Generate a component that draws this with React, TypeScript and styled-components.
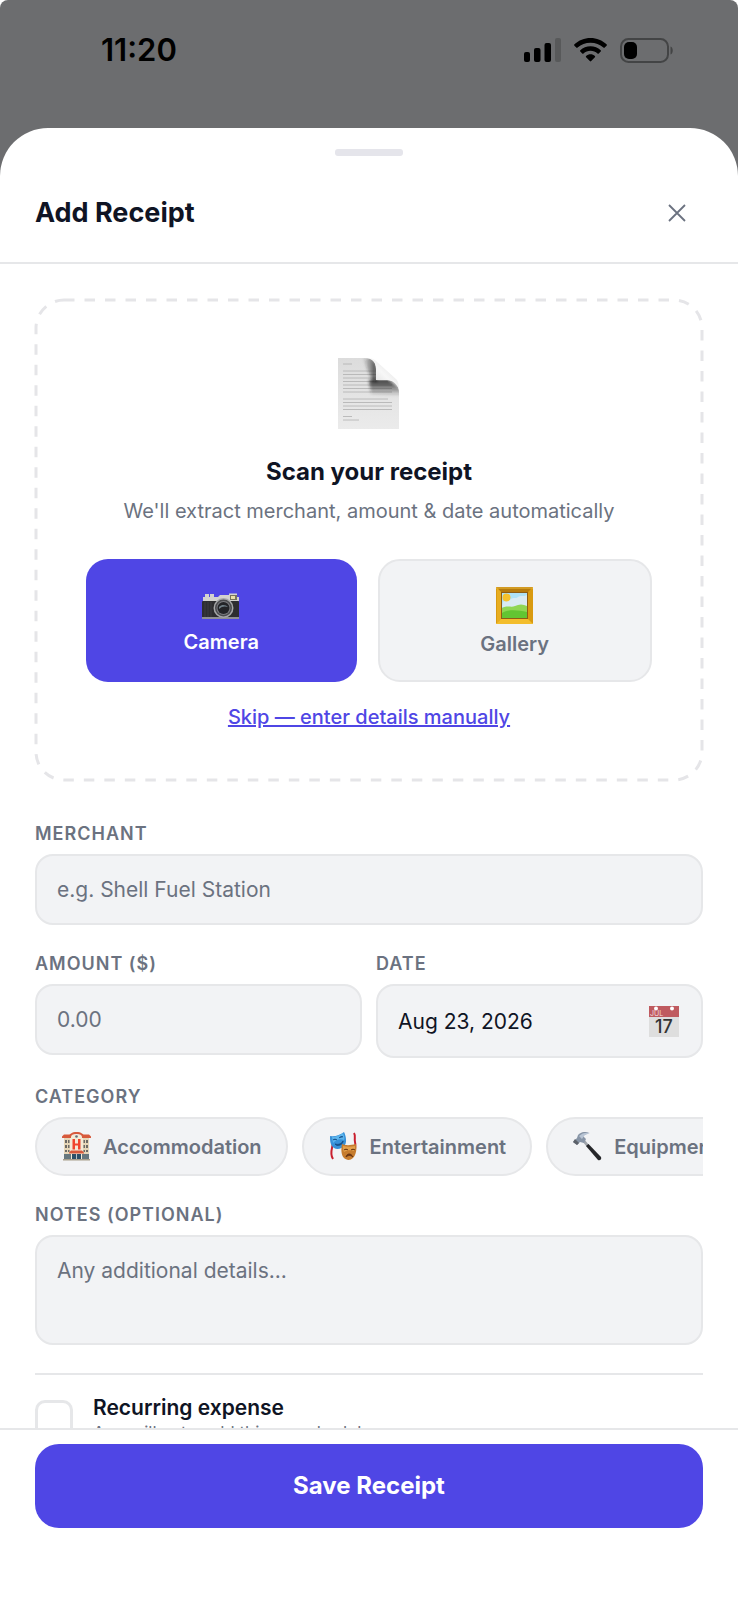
import React, { useState } from 'react';
import styled, { createGlobalStyle, css, ThemeProvider } from 'styled-components';

const theme = {
	colors: {
		backdrop: '#6c6d6f',
		sheet: '#ffffff',
		font: '#0f1424',
		muted: '#6b7280',
		field: '#f2f3f5',
		border: '#e6e7e9',
		handle: '#e5e5eb',
		primary: '#4f46e5',
	},
};

const GlobalStyle = createGlobalStyle`
	*, *::before, *::after {
		box-sizing: border-box;
	}
	body {
		margin: 0;
		background-color: #ffffff;
	}
	body, button, input, textarea {
		font-family: Inter, Roboto, "Liberation Sans", sans-serif;
	}
	h1, h2, p {
		margin: 0;
	}
	button {
		border: 0;
		background: none;
		cursor: pointer;
	}
	svg {
		display: block;
		flex-shrink: 0;
	}
`;

const Screen = styled.div`
	display: flex;
	flex-direction: column;
	height: 100vh;
	border-radius: 8px 8px 0 0;
	background-color: ${({ theme }) => theme.colors.backdrop};
	color: ${({ theme }) => theme.colors.font};
	overflow: hidden;
`;

const StatusBar = styled.div`
	display: flex;
	align-items: center;
	justify-content: space-between;
	flex-shrink: 0;
	height: 128px;
	padding: 0 64px 28px 101px;
	color: #000000;
`;

const Time = styled.time`
	font-size: 31px;
	line-height: 36px;
	font-weight: 600;
`;

const StatusIcons = styled.div`
	display: flex;
	align-items: center;
	gap: 13px;
`;

const Sheet = styled.main`
	display: flex;
	flex-direction: column;
	flex: 1;
	min-height: 0;
	border-radius: 48px 48px 0 0;
	background-color: ${({ theme }) => theme.colors.sheet};
`;

const Handle = styled.div`
	align-self: center;
	flex-shrink: 0;
	width: 68px;
	height: 7px;
	margin-top: 21px;
	border-radius: 3px;
	background-color: ${({ theme }) => theme.colors.handle};
`;

const Header = styled.header`
	display: flex;
	align-items: center;
	justify-content: space-between;
	flex-shrink: 0;
	padding: 32px 35px 24px;
	border-bottom: 2px solid ${({ theme }) => theme.colors.border};
`;

const Title = styled.h1`
	font-size: 27px;
	line-height: 34px;
	font-weight: 700;
`;

const CloseButton = styled.button`
	display: flex;
	align-items: center;
	justify-content: center;
	width: 52px;
	height: 50px;
	padding: 0;
	color: ${({ theme }) => theme.colors.muted};
`;

const Body = styled.div`
	flex: 1;
	min-height: 0;
	padding: 35px 35px 28px;
	overflow-y: auto;
	scrollbar-width: none;
`;

const ScanBox = styled.section`
	position: relative;
	display: flex;
	flex-direction: column;
	align-items: center;
	margin-bottom: 42px;
	padding: 59px 51px 51px;
`;

const DashedOutline = styled.svg`
	position: absolute;
	inset: 1px;
	width: calc(100% - 2px);
	height: calc(100% - 2px);
	overflow: visible;
	pointer-events: none;
`;

const ScanTitle = styled.h2`
	margin-top: 28px;
	font-size: 24px;
	line-height: 30px;
	font-weight: 700;
`;

const ScanText = styled.p`
	margin-top: 11px;
	font-size: 20px;
	line-height: 26px;
	color: ${({ theme }) => theme.colors.muted};
`;

const ScanActions = styled.div`
	display: flex;
	align-self: stretch;
	gap: 21px;
	margin-top: 35px;
`;

const ScanButton = styled.button<{ $primary?: boolean }>`
	display: flex;
	flex: 1 1 0;
	flex-direction: column;
	align-items: center;
	justify-content: flex-start;
	gap: 4px;
	padding: 26px 16px 23px;
	border-radius: 22px;
	font-size: 20px;
	line-height: 26px;
	font-weight: 600;
	${({ $primary, theme }) => $primary ? css`
		background-color: ${theme.colors.primary};
		color: #ffffff;
	` : css`
		border: 2px solid ${theme.colors.border};
		background-color: ${theme.colors.field};
		color: ${theme.colors.muted};
	`}
`;

const SkipButton = styled.button`
	margin-top: 22px;
	padding: 0;
	font-size: 20px;
	line-height: 26px;
	font-weight: 500;
	text-decoration: underline;
	color: ${({ theme }) => theme.colors.primary};
`;

const Form = styled.form`
	display: flex;
	flex-direction: column;
	gap: 28px;
`;

const Columns = styled.div`
	display: grid;
	grid-template-columns: 1fr 1fr;
	align-items: start;
	gap: 14px;
`;

const Field = styled.div`
	display: flex;
	flex-direction: column;
	gap: 9px;
	min-width: 0;
`;

const labelStyle = css`
	font-size: 18px;
	line-height: 22px;
	font-weight: 600;
	letter-spacing: 1px;
	text-transform: uppercase;
	color: ${({ theme }) => theme.colors.muted};
`;

const Label = styled.label`
	${labelStyle}
`;

const GroupLabel = styled.span`
	${labelStyle}
`;

const fieldStyle = css`
	width: 100%;
	padding: 20px;
	border: 2px solid ${({ theme }) => theme.colors.border};
	border-radius: 18px;
	outline: none;
	background-color: ${({ theme }) => theme.colors.field};
	color: ${({ theme }) => theme.colors.font};
	font-size: 21px;
	line-height: 27px;
	&::placeholder {
		color: ${({ theme }) => theme.colors.muted};
		opacity: 1;
	}
	&:focus-visible {
		border-color: ${({ theme }) => theme.colors.primary};
	}
`;

const TextInput = styled.input`
	${fieldStyle}
	height: 71px;
`;

const TextArea = styled.textarea`
	${fieldStyle}
	display: block;
	height: 110px;
	resize: none;
`;

const DateButton = styled.button`
	${fieldStyle}
	display: flex;
	align-items: center;
	justify-content: space-between;
	height: 74px;
	padding-right: 22px;
`;

const Chips = styled.div`
	display: flex;
	gap: 14px;
	overflow-x: auto;
	scrollbar-width: none;
`;

const Chip = styled.button<{ $selected: boolean }>`
	display: flex;
	align-items: center;
	flex-shrink: 0;
	gap: 12px;
	height: 59px;
	padding: 0 24px 0 25px;
	border: 2px solid ${({ $selected, theme }) => $selected ? theme.colors.primary : theme.colors.border};
	border-radius: 30px;
	background-color: ${({ theme }) => theme.colors.field};
	color: ${({ theme }) => theme.colors.muted};
	font-size: 20px;
	line-height: 26px;
	font-weight: 600;
`;

const RecurringRow = styled.label`
	display: flex;
	align-items: center;
	gap: 20px;
	padding-top: 19px;
	border-top: 2px solid ${({ theme }) => theme.colors.border};
`;

const Checkbox = styled.input`
	appearance: none;
	flex-shrink: 0;
	width: 38px;
	height: 38px;
	margin: 0;
	border: 3px solid ${({ theme }) => theme.colors.border};
	border-radius: 10px;
	background-color: #ffffff;
	&:checked {
		border-color: ${({ theme }) => theme.colors.primary};
		background-color: ${({ theme }) => theme.colors.primary};
	}
`;

const RecurringTitle = styled.span`
	display: block;
	font-size: 21px;
	line-height: 28px;
	font-weight: 600;
`;

const RecurringText = styled.span`
	display: block;
	font-size: 17px;
	line-height: 22px;
	color: ${({ theme }) => theme.colors.muted};
`;

const Footer = styled.footer`
	flex-shrink: 0;
	padding: 14px 35px 72px;
	border-top: 2px solid ${({ theme }) => theme.colors.border};
`;

const SaveButton = styled.button`
	width: 100%;
	padding: 27px;
	border-radius: 24px;
	background-color: ${({ theme }) => theme.colors.primary};
	color: #ffffff;
	font-size: 24px;
	line-height: 30px;
	font-weight: 700;
`;

const SignalIcon = () => (
	<svg width="37" height="24" viewBox="0 0 37 24" aria-hidden="true">
		<rect x="0" y="14" width="6" height="10" rx="2" />
		<rect x="10" y="10" width="6.500" height="14" rx="2" />
		<rect x="20.500" y="5" width="6.500" height="19" rx="2" />
		<rect x="31" y="0" width="6" height="24" rx="2" fill="#58595a" />
	</svg>
);

const WifiIcon = () => (
	<svg width="33" height="24" viewBox="0 0 33 24" aria-hidden="true">
		<path d="M16.5 0C22.7 0 28.3 2.4 32.6 6.3c.4.4.4 1 0 1.4l-1.9 1.9c-.4.4-.9.4-1.3 0C25.9 6.500 21.400 4.700 16.500 4.700S7.100 6.500 3.600 9.600c-.4.4-.9.4-1.3 0L.4 7.700C0 7.300 0 6.700.4 6.300 4.700 2.400 10.300 0 16.500 0z" />
		<path d="M16.500 8.200c3.900 0 7.500 1.500 10.200 4 .4.4.4 1 0 1.400l-1.900 1.900c-.4.4-.9.4-1.300 0-1.900-1.700-4.300-2.700-7-2.700s-5.100 1-7 2.700c-.4.4-.9.4-1.300 0l-1.900-1.900c-.4-.4-.4-1 0-1.400 2.700-2.500 6.300-4 10.200-4z" />
		<path d="M16.500 16.300c1.700 0 3.200.6 4.400 1.600.4.400.4.900 0 1.300l-3.700 3.900c-.4.400-1 .4-1.400 0l-3.700-3.900c-.4-.400-.4-.9 0-1.300 1.200-1 2.700-1.600 4.400-1.600z" />
	</svg>
);

const BatteryIcon = () => (
	<svg width="54" height="25" viewBox="0 0 54 25" aria-hidden="true">
		<rect x="1" y="1" width="47" height="23" rx="7.500" fill="none" stroke="#434445" strokeWidth="2" />
		<rect x="4" y="4" width="13" height="17" rx="5" />
		<path d="M50.500 8.500c3 1 3 7 0 8z" fill="#434445" />
	</svg>
);

const CloseIcon = () => (
	<svg width="18" height="18" viewBox="0 0 18 18" fill="none" stroke="currentColor" strokeWidth="1.800" aria-hidden="true">
		<path d="M1 1l16 16M17 1L1 17" />
	</svg>
);

const DOCUMENT_LINES = [13, 16.500, 20, 23.500, 27, 30.500, 34, 41, 44.500, 48, 51.500];

const DocumentIcon = () => (
	<svg width="63" height="71" viewBox="0 0 63 71" aria-hidden="true">
		<defs>
			<linearGradient id="docPaper" x1="0" y1="0" x2="0" y2="1">
				<stop offset="0" stopColor="#dcdcdc" />
				<stop offset="1" stopColor="#ebebeb" />
			</linearGradient>
			<linearGradient id="docShadeX" x1="0" y1="0" x2="1" y2="0">
				<stop offset="0" stopColor="#222222" stopOpacity="0" />
				<stop offset="1" stopColor="#222222" stopOpacity="0.800" />
			</linearGradient>
			<linearGradient id="docShadeY" x1="0" y1="1" x2="0" y2="0">
				<stop offset="0" stopColor="#222222" stopOpacity="0" />
				<stop offset="1" stopColor="#222222" stopOpacity="0.900" />
			</linearGradient>
			<linearGradient id="docCurl" x1="0" y1="1" x2="1" y2="0">
				<stop offset="0" stopColor="#cfcfcf" />
				<stop offset="0.500" stopColor="#f7f7f7" />
				<stop offset="1" stopColor="#d8d8d8" />
			</linearGradient>
			<clipPath id="docShape">
				<path d="M0 0h27c7 0 11 4 11 11v11h11c7 0 12 4 12 12v37H0z" />
			</clipPath>
			<filter id="docSoft" x="-30%" y="-30%" width="160%" height="160%">
				<feGaussianBlur stdDeviation="1.500" />
			</filter>
		</defs>
		<path d="M0 0h27c7 0 11 4 11 11v11h11c7 0 12 4 12 12v37H0z" fill="url(#docPaper)" />
		<g clipPath="url(#docShape)">
			<g stroke="#b0b0b0" strokeWidth="1" opacity="0.800">
				<path d="M5 6h9M5 58.500h9M5 62h16" />
				{DOCUMENT_LINES.map((y, index) => (
					<path key={y} d={`M5 ${y}h${index % 4 === 3 ? 45 : 49}`} />
				))}
			</g>
			<g filter="url(#docSoft)">
				<path d="M25 0h9l5 7v18l-5-2z" fill="url(#docShadeX)" />
				<path d="M31 22h20l12 9v7l-30-2z" fill="url(#docShadeY)" />
			</g>
		</g>
		<path d="M30 0c3 0 6 1 8 3l20 18c2 2 3 5 3 11-2-6-6-10-12-10H38V11C38 5 36 1 30 0z" fill="url(#docCurl)" />
	</svg>
);

const CameraIcon = () => (
	<svg width="40" height="40" viewBox="0 0 40 40" aria-hidden="true">
		<path d="M2 12h2V9h4v3h1V9h4v3h4l2-2h9V8.500h8V12h2v4H2z" fill="#d3d3cf" />
		<rect x="29" y="10" width="7" height="5" fill="#77735f" />
		<rect x="30" y="11" width="4" height="3" fill="#e9dfa9" />
		<rect x="1" y="16" width="37" height="18" rx="1" fill="#2d2d30" />
		<path d="M4 17v15M7 17v15M10 17v15" stroke="#3d3d41" />
		<rect x="1" y="32" width="37" height="2" fill="#8f8f92" />
		<circle cx="22.500" cy="23" r="10" fill="#a5a6a8" />
		<circle cx="22.500" cy="23" r="8.500" fill="#4a4b4e" />
		<circle cx="22.500" cy="23" r="7" fill="#7b7c80" />
		<circle cx="22.500" cy="23" r="6" fill="#222327" />
		<path d="M18 22c3-3 7-2 9 0-3-1-6-1-9 2z" fill="#6f7d86" />
	</svg>
);

const PictureIcon = () => (
	<svg width="40" height="40" viewBox="0 0 40 40" aria-hidden="true">
		<rect x="1" y="0" width="37" height="37" rx="1" fill="#d99a10" />
		<path d="M1 0h37l-5 5H6z" fill="#b57a0c" />
		<path d="M1 1h37" stroke="#eebb3c" />
		<path d="M2 1l4 4v27l-4 4z" fill="#e8ad20" />
		<path d="M1 37l5-5h27l5 5z" fill="#f3bd2c" />
		<rect x="6" y="5" width="27" height="27" fill="#8d5c14" />
		<rect x="7" y="6" width="25" height="25" fill="#aee1f5" />
		<path d="M8 15c4-3 6-1 8-3s5 0 7-2 6 0 9-2v12H7z" fill="#d9eaf2" />
		<circle cx="11.500" cy="10.500" r="4" fill="#f6c22c" />
		<path d="M7 21c6-3 9 0 13-2s8-2 12 0v12H7z" fill="#8fd653" />
		<path d="M7 26c6-4 16-3 25-1v6H7z" fill="#62c532" />
	</svg>
);

const CalendarIcon = () => (
	<svg width="30" height="31" viewBox="0 0 30 31" aria-hidden="true">
		<rect width="30" height="31" fill="#dedede" />
		<rect width="30" height="11" fill="#bf5a5f" />
		<circle cx="7" cy="2.500" r="2" fill="#ffffff" />
		<circle cx="23" cy="2.500" r="2" fill="#ffffff" />
		<text x="1" y="10" fontFamily="Inter, sans-serif" fontSize="7" fill="#f3dada">JUL</text>
		<text x="15" y="27" textAnchor="middle" fontFamily="Inter, sans-serif" fontSize="18" fontWeight="500" fill="#333333">17</text>
	</svg>
);

const HotelIcon = () => (
	<svg width="29" height="29" viewBox="0 0 29 29" aria-hidden="true">
		<rect x="2" y="5" width="25" height="23" fill="#e6d6b8" />
		<rect x="8" y="3" width="13" height="25" fill="#f4ead6" />
		<path d="M0 4.500L2 2.500h7L9 6H0zM20 2.500h7l2 2V6h-9z" fill="#d75a3c" />
		<path d="M7 5c0-3 3-5 7.500-5S22 2 22 5h-2c0-2-2-3-5.500-3S9 3 9 5z" fill="#d75a3c" />
		<circle cx="14.500" cy="4.500" r="1.300" fill="#61707a" />
		<path d="M3 8h2v3H3zM6 8h1.500v3H6zM3 13h2v3H3zM6 13h1.500v3H6zM3 18h2v2H3zM6 18h1.500v2H6zM21.500 8H23v3h-1.500zM24 8h2v3h-2zM21.500 13H23v3h-1.500zM24 13h2v3h-2zM21.500 18H23v2h-1.500zM24 18h2v2h-2z" fill="#6d6a66" />
		<path d="M10.500 7H13v4.500h3V7h2.500v10.500H16v-4h-3v4h-2.500z" fill="#f0452c" />
		<path d="M2 22h7v6H2zM20 22h7v6h-7z" fill="#66777e" />
		<path d="M7 20.500l2-2h11l2 2v1H7z" fill="#d75a3c" />
		<rect x="10" y="22" width="9" height="6" fill="#2d5068" />
		<path d="M14.500 22v6" stroke="#b8c4c8" />
		<rect x="1" y="27" width="27" height="1.500" fill="#a89f8c" />
	</svg>
);

const MasksIcon = () => (
	<svg width="29" height="29" viewBox="0 0 29 29" aria-hidden="true">
		<path d="M2 5c2 4 2 7 1 11s-1 8 1 11" fill="none" stroke="#c91f2e" strokeWidth="2" />
		<path d="M25 1c2 3 0 6 1 9s0 5 0 8" fill="none" stroke="#c91f2e" strokeWidth="2" />
		<path d="M1 4c5 1 10-1 14-4 2 4 3 10 1 13-3 4-8 5-11 3C1 13 1 8 1 4z" fill="#3791d8" />
		<path d="M3 5c4 0 8-2 11-4 1 3 2 5 1 7-4-2-8 0-11 3z" fill="#5cb4ec" />
		<path d="M4 8c1-1 3-1 4 0M10 6c1-1 3-2 4-1M6 12c3 1 7 0 8-3 0 4-6 6-8 3z" fill="#174f89" stroke="#174f89" />
		<path d="M13 12c5 2 9 1 14 0 1 5 0 11-3 14-3 3-7 2-9 0-3-3-3-9-2-14z" fill="#c67c2e" />
		<path d="M14 14c4 1 8 1 12 0 0 2 0 4-1 5-3-1-7-1-10 1-1-2-1-4-1-6z" fill="#e3a14c" />
		<path d="M15 18c1-1 3-1 4 0M22 18c1-1 3-1 4 0M17 25c1-4 5-4 7 0-2-2-5-2-7 0z" fill="#6b3512" stroke="#6b3512" />
	</svg>
);

const HammerIcon = () => (
	<svg width="29" height="29" viewBox="0 0 29 29" aria-hidden="true">
		<path d="M9 9l2-2 5 6-2 2z" fill="#a0a5ab" />
		<path d="M13 14l2.500-2L28 25c1 2-1 4-3 3z" fill="#26272a" />
		<path d="M0 10l4 3 3-3 4 1 2-4-3-3c2-2 4-2 6-3-4-2-8-1-11 2L4 6z" fill="#8794a6" />
		<path d="M6 4c3-3 7-4 11-3-2 1-4 1-6 3L9 7z" fill="#b9c5d5" />
		<path d="M0 10l4 3 2-2-4-4z" fill="#5c6169" />
	</svg>
);

const categories = [
	{ name: 'Accommodation', icon: <HotelIcon /> },
	{ name: 'Entertainment', icon: <MasksIcon /> },
	{ name: 'Equipment', icon: <HammerIcon /> },
];

function ScanReceipt() {
	return (
		<ScanBox>
			<DashedOutline aria-hidden="true">
				<rect width="100%" height="100%" rx="28" fill="none" stroke="#e5e5e8" strokeWidth="3" strokeDasharray="10.500 10" />
			</DashedOutline>
			<DocumentIcon />
			<ScanTitle>Scan your receipt</ScanTitle>
			<ScanText>We'll extract merchant, amount &amp; date automatically</ScanText>
			<ScanActions>
				<ScanButton type="button" $primary>
					<CameraIcon />
					Camera
				</ScanButton>
				<ScanButton type="button">
					<PictureIcon />
					Gallery
				</ScanButton>
			</ScanActions>
			<SkipButton type="button">Skip — enter details manually</SkipButton>
		</ScanBox>
	);
}

function ReceiptForm() {
	const [category, setCategory] = useState('');
	return (
		<Form id="receipt-form" onSubmit={(event) => event.preventDefault()}>
			<Field>
				<Label htmlFor="merchant">Merchant</Label>
				<TextInput id="merchant" placeholder="e.g. Shell Fuel Station" />
			</Field>
			<Columns>
				<Field>
					<Label htmlFor="amount">Amount ($)</Label>
					<TextInput id="amount" inputMode="decimal" placeholder="0.00" />
				</Field>
				<Field>
					<Label htmlFor="date">Date</Label>
					<DateButton id="date" type="button">
						Aug 23, 2026
						<CalendarIcon />
					</DateButton>
				</Field>
			</Columns>
			<Field>
				<GroupLabel id="category">Category</GroupLabel>
				<Chips role="group" aria-labelledby="category">
					{categories.map(({ name, icon }) => (
						<Chip
							key={name}
							type="button"
							$selected={category === name}
							aria-pressed={category === name}
							onClick={() => setCategory(name)}
						>
							{icon}
							{name}
						</Chip>
					))}
				</Chips>
			</Field>
			<Field>
				<Label htmlFor="notes">Notes (optional)</Label>
				<TextArea id="notes" placeholder="Any additional details..." />
			</Field>
			<RecurringRow>
				<Checkbox type="checkbox" />
				<span>
					<RecurringTitle>Recurring expense</RecurringTitle>
					<RecurringText>App will auto-add this on schedule</RecurringText>
				</span>
			</RecurringRow>
		</Form>
	);
}

function App() {
	return (
		<ThemeProvider theme={theme}>
			<GlobalStyle />
			<Screen>
				<StatusBar>
					<Time>11:20</Time>
					<StatusIcons>
						<SignalIcon />
						<WifiIcon />
						<BatteryIcon />
					</StatusIcons>
				</StatusBar>
				<Sheet>
					<Handle />
					<Header>
						<Title>Add Receipt</Title>
						<CloseButton type="button" aria-label="Close">
							<CloseIcon />
						</CloseButton>
					</Header>
					<Body>
						<ScanReceipt />
						<ReceiptForm />
					</Body>
					<Footer>
						<SaveButton type="submit" form="receipt-form">Save Receipt</SaveButton>
					</Footer>
				</Sheet>
			</Screen>
		</ThemeProvider>
	);
}

export default App;
